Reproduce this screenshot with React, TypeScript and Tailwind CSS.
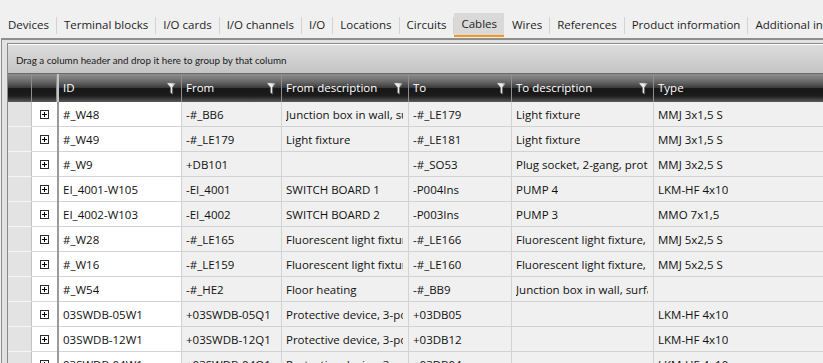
import React from "react";

const tabs = [
  "Devices",
  "Terminal blocks",
  "I/O cards",
  "I/O channels",
  "I/O",
  "Locations",
  "Circuits",
  "Cables",
  "Wires",
  "References",
  "Product information",
  "Additional information",
];

const rows: string[][] = [
  ["#_W48", "-#_BB6", "Junction box in wall, surface-mounted", "-#_LE179", "Light fixture", "MMJ 3x1,5 S"],
  ["#_W49", "-#_LE179", "Light fixture", "-#_LE181", "Light fixture", "MMJ 3x1,5 S"],
  ["#_W9", "+DB101", "", "-#_SO53", "Plug socket, 2-gang, protected", "MMJ 3x2,5 S"],
  ["EI_4001-W105", "-EI_4001", "SWITCH BOARD 1", "-P004Ins", "PUMP 4", "LKM-HF 4x10"],
  ["EI_4002-W103", "-EI_4002", "SWITCH BOARD 2", "-P003Ins", "PUMP 3", "MMO 7x1,5"],
  ["#_W28", "-#_LE165", "Fluorescent light fixture, 2x36W", "-#_LE166", "Fluorescent light fixture, 2x36W", "MMJ 5x2,5 S"],
  ["#_W16", "-#_LE159", "Fluorescent light fixture, 2x36W", "-#_LE160", "Fluorescent light fixture, 2x36W", "MMJ 5x2,5 S"],
  ["#_W54", "-#_HE2", "Floor heating", "-#_BB9", "Junction box in wall, surface-mounted", ""],
  ["03SWDB-05W1", "+03SWDB-05Q1", "Protective device, 3-pole", "+03DB05", "", "LKM-HF 4x10"],
  ["03SWDB-12W1", "+03SWDB-12Q1", "Protective device, 3-pole", "+03DB12", "", "LKM-HF 4x10"],
  ["03SWDB-04W1", "+03SWDB-04Q1", "Protective device, 3-pole", "+03DB04", "", "LKM-HF 4x10"],
];

function Funnel() {
  return (
    <svg width="11" height="13" viewBox="0 0 11 13" className="shrink-0">
      <defs>
        <linearGradient id="fg" x1="0" y1="0" x2="1" y2="0">
          <stop offset="0" stopColor="#ffffff" />
          <stop offset="0.55" stopColor="#e8e8e8" />
          <stop offset="1" stopColor="#7a7a7a" />
        </linearGradient>
      </defs>
      <path d="M0.5 0.8 H10.5 L6.6 5.4 V12.3 L4.4 10.8 V5.4 Z" fill="url(#fg)" stroke="#4a4a4a" strokeWidth="0.6" />
    </svg>
  );
}

function HeaderCell({ label, w, filter = true, last = false }: { label: string; w: string; filter?: boolean; last?: boolean }) {
  return (
    <div
      className={`${w} ${last ? "flex-1" : "shrink-0 border-r border-[#8e8e8e]"} h-full flex items-center justify-between pl-[4px] pr-[4px] text-white`}
    >
      <span className="whitespace-nowrap">{label}</span>
      {filter && <Funnel />}
    </div>
  );
}

function Cell({ text, w, white = false, last = false }: { text: string; w: string; white?: boolean; last?: boolean }) {
  return (
    <div
      className={`${w} ${last ? "flex-1" : "shrink-0 border-r"} h-full border-b border-[#d2d2d2] ${white ? "bg-white" : "bg-[#f0f0f0]"} flex items-center pl-[4px] pr-[5px] pt-[1px]`}
    >
      <div className="overflow-hidden whitespace-nowrap text-[#111]">{text}</div>
    </div>
  );
}

export default function App() {
  const activeIdx = 7;
  return (
    <div
      className="w-[823px] h-[363px] overflow-hidden bg-[#f0f0f0] text-[11.5px] text-black"
      style={{ fontFamily: '"Open Sans", "Noto Sans", sans-serif' }}
    >
      {/* Tabs */}
      <div className="h-[38px] flex items-start pt-[13px] whitespace-nowrap">
        {tabs.map((t, i) => (
          <React.Fragment key={t}>
            {i > 0 && (
              <div
                className={`w-px h-[17px] mt-[4px] shrink-0 ${i - 1 === activeIdx ? "bg-transparent" : "bg-[#d3d3d3]"}`}
              />
            )}
            <div
              className={`shrink-0 h-[24px] flex items-center ${i === 0 ? "pl-[8px]" : "pl-[7px]"} pr-[7px] ${
                i === activeIdx ? "bg-[#d9d9d9] border-b-2 border-[#f39a1e]" : ""
              } text-[#1e1e1e]`}
            >
              {t}
            </div>
          </React.Fragment>
        ))}
      </div>

      {/* Grid container */}
      <div className="ml-px h-[325px] border-t-2 border-l border-[#8e8e8e] bg-[#e2e2e2] pt-[3px] pl-[5px]">
        <div className="h-full border-t border-l border-[#8a8a8a] flex flex-col">
          {/* Group panel */}
          <div
            className="h-[30px] shrink-0 border-t border-white border-b border-b-[#6a6a6a] bg-[linear-gradient(to_bottom,#dcdcdc,#c5c5c5)] flex items-center pl-[8px] pt-[2px] text-[9.8px] text-[#1a1a1a]"
            style={{ fontFamily: 'Lato, "Open Sans", sans-serif' }}
          >
            Drag a column header and drop it here to group by that column
          </div>
          {/* Header */}
          <div className="h-[28px] shrink-0 flex bg-[linear-gradient(to_bottom,#8e8e8e_0%,#6c6c6c_25%,#3e3e3e_48%,#171717_52%,#1c1c1c_78%,#5a5a5a_100%)] text-[11.5px]">
            <div className="w-[24px] shrink-0 h-full border-r border-[#8e8e8e]" />
            <div className="w-[25px] shrink-0 h-full border-r border-[#8e8e8e]" />
            <div className="w-[2px] shrink-0 h-full bg-[#c4c4c4]" />
            <HeaderCell label="ID" w="w-[123px]" />
            <HeaderCell label="From" w="w-[100px]" />
            <HeaderCell label="From description" w="w-[127px]" />
            <HeaderCell label="To" w="w-[103px]" />
            <HeaderCell label="To description" w="w-[142px]" />
            <HeaderCell label="Type" w="" filter={false} last />
          </div>
          {/* Body */}
          <div className="flex flex-col">
            {rows.map((r, i) => (
              <div key={i} className="h-[25px] shrink-0 flex">
                <div className="w-[24px] shrink-0 h-full bg-[#e3e3e3] border-r border-[#c2c2c2] border-b border-b-[#f6f6f6]" />
                <div className="w-[25px] shrink-0 h-full bg-white border-b border-[#d8d8d8] flex items-center justify-center">
                  <div className="w-[9px] h-[9px] border border-[#2a2a2a] bg-white relative">
                    <div className="absolute left-[1px] right-[1px] top-[3px] h-px bg-black" />
                    <div className="absolute top-[1px] bottom-[1px] left-[3px] w-px bg-black" />
                  </div>
                </div>
                <div className="w-[2px] shrink-0 h-full bg-[#9a9a9a]" />
                <Cell text={r[0]} w="w-[123px] border-[#d2d2d2]" white />
                <Cell text={r[1]} w="w-[100px] border-[#d2d2d2]" />
                <Cell text={r[2]} w="w-[127px] border-[#d2d2d2]" />
                <Cell text={r[3]} w="w-[103px] border-[#d2d2d2]" />
                <Cell text={r[4]} w="w-[142px] border-[#d2d2d2]" />
                <Cell text={r[5]} w="" last />
              </div>
            ))}
          </div>
        </div>
      </div>
    </div>
  );
}
